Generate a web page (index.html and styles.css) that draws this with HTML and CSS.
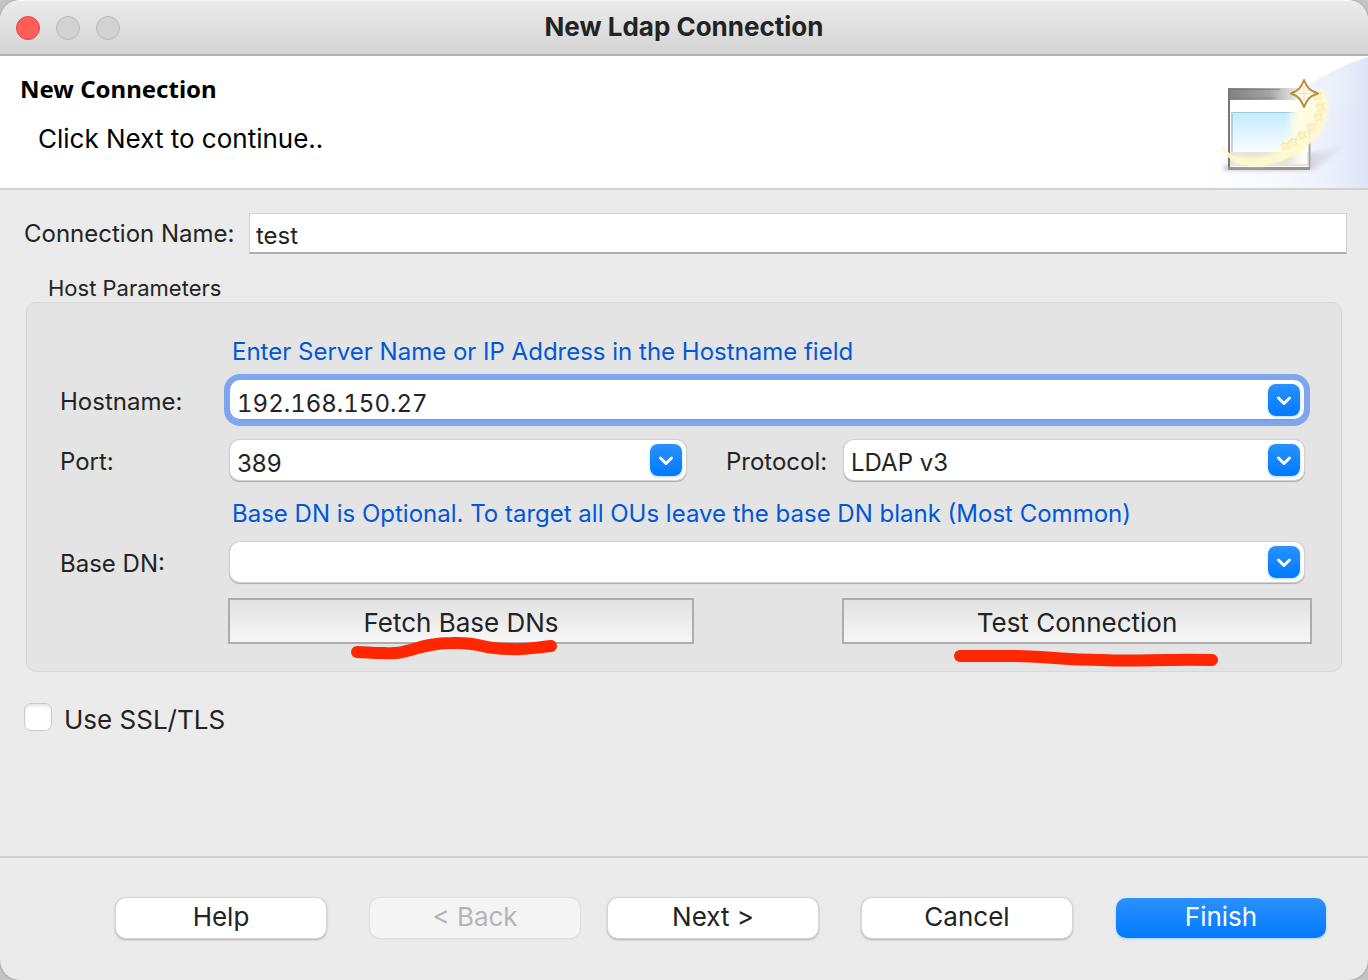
FILE: index.html
```html
<!DOCTYPE html>
<html lang="en">
<head>
<meta charset="utf-8">
<title>New Ldap Connection</title>
<link rel="stylesheet" href="styles.css">
</head>
<body>
<div class="window">
  <header class="titlebar">
    <div class="lights">
      <button class="light light-close" type="button" aria-label="Close"></button>
      <button class="light" type="button" aria-label="Minimize" disabled></button>
      <button class="light" type="button" aria-label="Zoom" disabled></button>
    </div>
    <h1 class="title">New Ldap Connection</h1>
  </header>

  <section class="banner">
    <div class="banner-text">
      <h2 class="banner-heading">New Connection</h2>
      <p class="banner-message">Click Next to continue..</p>
    </div>
    <svg class="banner-art" width="168" height="132" viewBox="0 0 168 132" aria-hidden="true">
      <defs>
        <linearGradient id="sky" x1="0" y1="0" x2="1" y2="0"><stop offset="0" stop-color="#fff" stop-opacity="0"/><stop offset="1" stop-color="#d8e1f5"/></linearGradient>
        <linearGradient id="low" x1="0" y1="0" x2="1" y2="0"><stop offset="0" stop-color="#fff"/><stop offset=".5" stop-color="#f4f6fd"/><stop offset="1" stop-color="#d9e2f6"/></linearGradient>
        <linearGradient id="bar" x1="0" y1="0" x2="1" y2="0"><stop offset="0" stop-color="#808080"/><stop offset=".5" stop-color="#a4a4a4"/><stop offset=".85" stop-color="#ececec"/><stop offset="1" stop-color="#f6f6f6"/></linearGradient>
        <linearGradient id="pane" x1="0" y1="0" x2="0" y2="1"><stop offset="0" stop-color="#c3ebfd"/><stop offset="1" stop-color="#fafdff"/></linearGradient>
        <linearGradient id="fade" x1="0" y1="0" x2="1" y2="0"><stop offset=".5" stop-color="#fffef4" stop-opacity="0"/><stop offset=".9" stop-color="#fffef4"/></linearGradient>
        <linearGradient id="shade" x1="0" y1="0" x2="1" y2="0"><stop offset=".5" stop-color="#9c8d9f" stop-opacity=".65"/><stop offset="1" stop-color="#c9cbe0" stop-opacity=".1"/></linearGradient>
        <filter id="edge" x="-10%" y="-10%" width="120%" height="120%"><feGaussianBlur stdDeviation=".7"/></filter>
        <filter id="soft" x="-20%" y="-20%" width="140%" height="140%"><feGaussianBlur stdDeviation="2"/></filter>
        <filter id="glow" x="-20%" y="-20%" width="140%" height="140%"><feGaussianBlur stdDeviation="4"/></filter>
      </defs>
      <path d="M0 132V108C50 92 82 28 168 1V132Z" fill="url(#low)" opacity=".8"/>
      <path d="M116 34C134 20 150 8 168 1V44C148 46 130 50 112 64Z" fill="url(#sky)" opacity=".5"/>
      <path d="M100 132C112 90 128 50 168 43V132Z" fill="url(#sky)" opacity=".5"/>
      <path d="M108 98L146 90L114 114H24V110H108Z" fill="url(#shade)" filter="url(#soft)"/>
      <g filter="url(#edge)">
        <path d="M28 32H110V113H28Z" fill="#fff"/>
        <path d="M28 32H110V44H28Z" fill="url(#bar)"/>
        <path d="M28 33.500H80M28 42H76" stroke="#777" opacity=".6"/>
        <path d="M31 56H107V96H31Z" fill="url(#pane)"/>
        <path d="M31 56.500H96" stroke="#91b9ca" opacity=".7"/>
        <path d="M30 96H108V110H30Z" fill="#e7e4d9"/>
        <path d="M29 34V112" stroke="#777" stroke-width="2"/>
        <path d="M32 58V96" stroke="#8eacb8" stroke-width="1"/>
        <path d="M109.500 66V112" stroke="#a5a49f" stroke-width="2"/>
        <path d="M28 112.500H110" stroke="#96948e" stroke-width="3"/>
        <path d="M66 54H107V108H66Z" fill="url(#fade)"/>
      </g>
      <path d="M94 56C120 40 132 28 122 58C108 84 78 104 54 108C94 96 92 76 94 56Z" fill="#fffde0" filter="url(#glow)"/>
      <path d="M119 36C132 64 112 84 86 97C66 107 46 107 34 103" fill="none" stroke="#fffccf" stroke-width="8" opacity=".9" filter="url(#soft)"/>
      <path d="M22 91C34 112 66 111 87 100C113 88 132 66 120 36" fill="none" stroke="#fffacb" stroke-width="4" opacity=".9" filter="url(#edge)"/>
      <g fill="#fff6c4" stroke="#fbe0a8" stroke-width="1" filter="url(#edge)">
        <path id="spark" d="M115 36l2.500 2 3.500-2-1.500 4 2 3-3.500-.5-3 2 0-4-2.500-2 3-.500Z"/>
        <use href="#spark" x="3" y="11"/><use href="#spark" x="1" y="21"/><use href="#spark" x="-6" y="31"/><use href="#spark" x="-15" y="39"/><use href="#spark" x="-24" y="46"/><use href="#spark" x="-32" y="50"/>
      </g>
      <path d="M104 24C107 32 110 35 118 37.500C110 40 107 43 104 51C101 43 98 40 91 37.500C98 35 101 32 104 24Z" fill="#fff8ea" stroke="#b98d3a" stroke-width="2" stroke-linejoin="round"/>
      <path d="M104 30V45M97 37.500H111" stroke="#f4dfc0" stroke-width="1"/>
    </svg>
  </section>

  <main class="content">
    <div class="name-row">
      <label class="label" for="conn">Connection Name:</label>
      <input class="plain-input" id="conn" type="text" value="test">
    </div>

    <h3 class="group-title" id="host-title">Host Parameters</h3>
    <div class="group" role="group" aria-labelledby="host-title">
      <p class="hint">Enter Server Name or IP Address in the Hostname field</p>
      <div class="form-row">
        <label class="label" for="host">Hostname:</label>
        <div class="combo combo-focus">
          <input class="combo-input combo-address" id="host" type="text" value="192.168.150.27">
          <button class="combo-arrow" type="button" aria-label="Show hostnames"><svg class="chevron" width="32" height="32" viewBox="0 0 32 32"><path d="M10.500 14L16 19.500L21.500 14"/></svg></button>
        </div>
      </div>
      <div class="form-row form-row-split">
        <label class="label" for="port">Port:</label>
        <div class="combo">
          <input class="combo-input" id="port" type="text" value="389">
          <button class="combo-arrow" type="button" aria-label="Show ports"><svg class="chevron" width="32" height="32" viewBox="0 0 32 32"><path d="M10.500 14L16 19.500L21.500 14"/></svg></button>
        </div>
        <label class="label label-second" for="protocol">Protocol:</label>
        <div class="combo">
          <select class="combo-input" id="protocol"><option>LDAP v3</option><option>LDAP v2</option></select>
          <span class="combo-arrow" aria-hidden="true"><svg class="chevron" width="32" height="32" viewBox="0 0 32 32"><path d="M10.500 14L16 19.500L21.500 14"/></svg></span>
        </div>
      </div>
      <p class="hint">Base DN is Optional. To target all OUs leave the base DN blank (Most Common)</p>
      <div class="form-row">
        <label class="label" for="base">Base DN:</label>
        <div class="combo">
          <input class="combo-input" id="base" type="text" value="">
          <button class="combo-arrow" type="button" aria-label="Show base DNs"><svg class="chevron" width="32" height="32" viewBox="0 0 32 32"><path d="M10.500 14L16 19.500L21.500 14"/></svg></button>
        </div>
      </div>
      <div class="actions">
        <div class="marked">
          <button class="bevel" type="button">Fetch Base DNs</button>
          <svg class="mark mark-fetch" width="208" height="26" viewBox="0 0 208 26" aria-hidden="true"><path d="M7 17C16 17 20 18 34 18C62 20 66 8 102 8C136 7 126 14 160 14C180 15 188 12 201 11"/></svg>
        </div>
        <div class="marked">
          <button class="bevel" type="button">Test Connection</button>
          <svg class="mark mark-test" width="266" height="26" viewBox="0 0 266 26" aria-hidden="true"><path d="M7 9H62C88 9 112 13 148 13C190 15 196 12 259 13"/></svg>
        </div>
      </div>
    </div>

    <label class="check-row"><input class="check" type="checkbox"><span>Use SSL/TLS</span></label>
  </main>

  <footer class="footer">
    <button class="push" type="button">Help</button>
    <div class="nav-pair">
      <button class="push" type="button" disabled>&lt; Back</button>
      <button class="push" type="button">Next &gt;</button>
    </div>
    <button class="push" type="button">Cancel</button>
    <button class="push push-default" type="button">Finish</button>
  </footer>
</div>
</body>
</html>
```
FILE: styles.css
```css
* { box-sizing: border-box; }
body { margin: 0; background: #c4c4c4; color: #232323; font-family: Inter, "Liberation Sans", sans-serif; font-size: 24px; line-height: 32px; }
h1, h2, h3, p { margin: 0; font-weight: 400; }
button, input, select { margin: 0; padding: 0; border: 0; font: inherit; color: inherit; }
.window { display: flex; flex-direction: column; min-height: 100vh; overflow: hidden; border-radius: 20px; background: #ebebeb; box-shadow: 0 0 2px #777; }

.titlebar { display: grid; grid-template-columns: 1fr auto 1fr; align-items: center; height: 56px; padding: 0 16px; border-top: 1px solid #f6f6f6; border-bottom: 2px solid #b2b2b2; background: linear-gradient(#ebebeb, #d4d4d4); }
.lights { display: flex; gap: 16px; }
.light { width: 24px; height: 24px; border: 1px solid #b9b9b9; border-radius: 50%; background: #d2d2d2; }
.light-close { border-color: #e2463f; background: #ff5f57; }
.title { padding-bottom: 2px; font-size: 26px; font-weight: 700; }

.banner { display: flex; justify-content: space-between; height: 134px; border-bottom: 2px solid #d2d2d2; background: #fff; color: #000; }
.banner-text { padding: 17px 20px; }
.banner-heading { font-family: "Noto Sans", sans-serif; font-size: 24px; font-weight: 700; }
.banner-message { padding: 18px 18px 0; font-size: 26px; }
.banner-art { flex: none; }

.content { flex: 1; padding: 23px 21px 0 24px; }
.name-row { display: grid; grid-template-columns: 225px 1fr; align-items: center; }
.label { font-size: 24px; white-space: nowrap; }
.plain-input { width: 100%; height: 41px; padding: 5px 6px 0; border: 1px solid #d2d2d2; border-bottom: 2px solid #b0b0b0; background: #fff; }
.group-title { padding: 18px 24px 0; font-size: 22px; }
.group { margin: -2px 5px 0 2px; padding: 33px 29px 27px 33px; border: 1px solid #d8d8d8; border-radius: 10px; background: #e4e4e4; }
.hint { padding-left: 172px; color: #0057d9; }
.form-row { display: grid; grid-template-columns: 170px 1fr; align-items: center; margin: 12px 8px 0 0; }
.form-row .label { padding-top: 4px; }
.form-row-split { grid-template-columns: 170px 114fr 158px 115fr; margin: 20px 8px 18px 0; }
.label-second { padding-left: 40px; }
.combo { display: flex; align-items: center; gap: 8px; height: 40px; padding: 0 4px 0 7px; border-radius: 10px; background: #fff; box-shadow: 0 0 0 1px #d2d2d2, 0 1px 1px 1px #aaa; }
.combo-focus { box-shadow: inset 0 -1px 0 #6d96dd, 0 0 0 6px #7da6ee; }
.combo-input { flex: 1; min-width: 0; height: 40px; padding-top: 6px; background: transparent; outline: 0; appearance: none; }
.combo-address { font-variant-numeric: tabular-nums; }
.combo-arrow { flex: none; width: 32px; height: 32px; border-radius: 8px; background: linear-gradient(#2b91ff, #007aff); box-shadow: 0 1px 3px #b5d6ff; pointer-events: none; }
.chevron { display: block; fill: none; stroke: #fff; stroke-width: 3; stroke-linecap: round; stroke-linejoin: round; }

.actions { display: grid; grid-template-columns: 233fr 235fr; gap: 148px; margin: 16px 0 0 168px; }
.marked { position: relative; }
.bevel { display: block; width: 100%; height: 46px; padding-top: 3px; border: 2px solid #adadad; background: linear-gradient(#e1e1e1, #f7f7f7); font-size: 26px; }
.mark { position: absolute; fill: none; stroke: #ff2600; stroke-width: 12; stroke-linecap: round; stroke-linejoin: round; pointer-events: none; }
.mark-fetch { left: 122px; top: 37px; }
.mark-test { left: 111px; top: 49px; }

.check-row { display: inline-flex; align-items: flex-start; gap: 12px; margin-top: 31px; font-size: 26px; }
.check { width: 28px; height: 28px; border: 1px solid #cbcbcb; border-radius: 7px; background: #fff; box-shadow: inset 0 2px 3px #e4e4e4; appearance: none; }
.check-row span { padding-top: 1px; }

.footer { display: flex; justify-content: flex-end; gap: 44px; padding: 40px 42px 42px; border-top: 2px solid #d2d2d2; }
.nav-pair { display: flex; gap: 28px; }
.push { width: 210px; height: 40px; padding-bottom: 2px; border-radius: 10px; background: #fff; box-shadow: 0 0 0 1px #d6d6d6, 0 1px 2px 1px #b0b0b0; font-size: 26px; }
.push:disabled { background: #f4f4f4; color: #b4b4b4; box-shadow: 0 0 0 1px #dedede, 0 1px 2px #d0d0d0; }
.push-default { background: linear-gradient(#2b91ff, #007aff); color: #fff; box-shadow: 0 1px 3px #a9cfff; }
```
